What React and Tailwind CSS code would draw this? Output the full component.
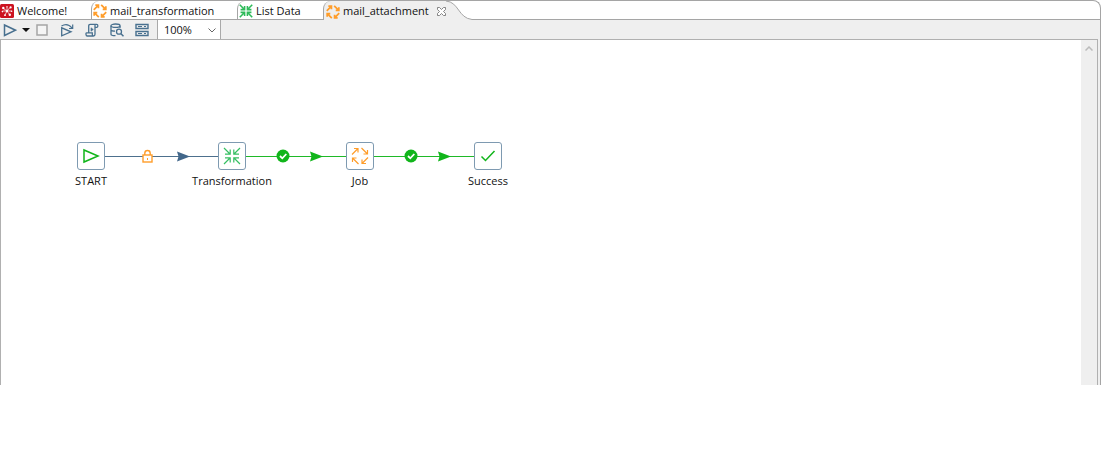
import React from "react";

function WelcomeIcon() {
  return (
    <svg width="14" height="14" viewBox="0 0 14 14" className="shrink-0" aria-hidden="true">
      <rect width="14" height="14" rx="1.5" fill="#cc1320" />
      <path
        d="M7 7 3.500 4.500M7 7l3-3.500M7 7h4.500M7 7l2.500 3.500M7 7l-2 4M7 7H2.500M7 7V3"
        stroke="#fff"
        strokeWidth=".7"
      />
      <g fill="#fff">
        <circle cx="3.300" cy="4" r="1.200" />
        <circle cx="7" cy="2.800" r=".7" />
        <circle cx="10.600" cy="3.400" r="1.100" />
        <circle cx="11.600" cy="7.200" r=".8" />
        <circle cx="9.800" cy="10.800" r="1.200" />
        <circle cx="5" cy="11.200" r=".9" />
        <circle cx="2.400" cy="7.600" r=".8" />
        <circle cx="7" cy="7" r="1.200" />
      </g>
    </svg>
  );
}

function ArrowsOut({ size, width }) {
  return (
    <svg width={size} height={size} viewBox="0 0 18 18" fill="none" stroke="#ff9d2a" strokeWidth={width} className="shrink-0" aria-hidden="true">
      <path d="M1 7.500 7 1.500M3 1.500h4v4" />
      <path d="M10.500 1 16.500 7M16.500 3v4h-4" />
      <path d="M17 10.500 11 16.500M15 16.500h-4v-4" />
      <path d="M7.500 17 1.500 11M1.500 15v-4h4" />
    </svg>
  );
}

function ArrowsIn({ size, width, color }) {
  return (
    <svg width={size} height={size} viewBox="0 0 18 18" fill="none" stroke={color} strokeWidth={width} className="shrink-0" aria-hidden="true">
      <path d="M1 1l6 6M7.200 2.500v4.700H2" />
      <path d="M17 1l-6 6M10.800 2.500v4.700H16" />
      <path d="M1 17l6-6M7.200 15.500v-4.700H2" />
      <path d="M17 17l-6-6M10.800 15.500v-4.700H16" />
    </svg>
  );
}

function Tab({ icon, label, width, first }) {
  return (
    <button
      role="tab"
      aria-selected="false"
      className={`flex h-[19px] shrink-0 items-center gap-0.5 border-b border-[#a5a5a5] pt-0.5 ${width} ${first ? "" : "rounded-tl-lg border-l pl-px"}`}
    >
      {icon}
      <span className="whitespace-nowrap pl-px">{label}</span>
    </button>
  );
}

function ToolButton({ label, children, width = "w-[25px]" }) {
  return (
    <button aria-label={label} className={`flex h-5 shrink-0 items-center justify-center ${width}`}>
      {children}
    </button>
  );
}

function ToolSvg({ children }) {
  return (
    <svg width="14" height="14" viewBox="0 0 14 14" fill="none" stroke="#48708f" strokeWidth="1.5" className="shrink-0" aria-hidden="true">
      {children}
    </svg>
  );
}

function Toolbar() {
  return (
    <div role="toolbar" className="flex h-[19px] items-center bg-[#efefef] pl-0.5">
      <ToolButton label="Run" width="w-[15px]">
        <ToolSvg>
          <path d="M1.500 2v10.500L12.500 7.200z" />
        </ToolSvg>
      </ToolButton>
      <ToolButton label="Run options" width="w-[17px]">
        <svg width="8" height="4" viewBox="0 0 8 4" aria-hidden="true">
          <path d="M0 0h8L4 4z" fill="#111" />
        </svg>
      </ToolButton>
      <ToolButton label="Stop" width="w-4">
        <svg width="12" height="12" viewBox="0 0 12 12" aria-hidden="true">
          <rect x="1" y="1" width="10" height="10" fill="#f5f5f5" stroke="#a5a5a5" strokeWidth="1.500" />
        </svg>
      </ToolButton>
      <div className="w-1" />
      <ToolButton label="Replay">
        <ToolSvg>
          <path d="M1.700 4.800v8L11 8.800z" strokeWidth="1.300" />
          <path d="M1.500 3C5 .800 9 1.200 12 5M12.700 1.500V5.500H9" strokeWidth="1.200" />
        </ToolSvg>
      </ToolButton>
      <ToolButton label="Generate SQL">
        <ToolSvg>
          <path d="M3.700 9.500V3c0-1 .5-1.700 1.500-1.700h6.500c1.500 0 1.500 3 0 3H10v7c0 1-.6 1.700-1.600 1.700H2.200C.7 13 .7 9.800 1.500 9.800h5.800v1.700c0 .8.400 1.300 1 1.300M10 4.300V2.500c0-.7.300-1.200.9-1.200" strokeWidth="1.300" />
          <path d="M6 4.800v3.400L8.300 6.500z" fill="#48708f" strokeWidth=".6" />
        </ToolSvg>
      </ToolButton>
      <ToolButton label="Explore database">
        <ToolSvg>
          <ellipse cx="5.500" cy="2.700" rx="4.500" ry="1.700" strokeWidth="1.300" />
          <path d="M1 2.700v8.500c0 .9 2 1.500 4.500 1.500M10 2.700V5M1 7c.3.800 2 1.200 4 1.200" strokeWidth="1.300" />
          <circle cx="9" cy="8.700" r="2.500" strokeWidth="1.300" />
          <path d="m11 10.700 2.500 2.500" />
        </ToolSvg>
      </ToolButton>
      <ToolButton label="Show results">
        <ToolSvg>
          <path d="M1 1.500h12v4H1zM1 8.500h12v4H1z" strokeWidth="1.400" />
          <path d="M3 3.500h4M9 3.500h2M3 10.500h4M9 10.500h2" strokeWidth="1.200" />
        </ToolSvg>
      </ToolButton>
      <div className="relative ml-[3px] flex h-full w-16 items-center border-x border-[#a9a9a9] bg-white">
        <select aria-label="Zoom" defaultValue="100%" className="h-full w-full appearance-none bg-transparent pl-1.5 leading-4 outline-none">
          <option>50%</option>
          <option>100%</option>
          <option>200%</option>
        </select>
        <svg width="8" height="5" viewBox="0 0 8 5" className="pointer-events-none absolute right-1 top-2" fill="none" stroke="#666" aria-hidden="true">
          <path d="M.5.500 4 4 7.500.500" />
        </svg>
      </div>
    </div>
  );
}

function Node({ label, place, children }) {
  return (
    <div className={`absolute top-[102px] flex w-28 -translate-x-1/2 flex-col items-center gap-[3px] ${place}`}>
      <div className="flex size-7 items-center justify-center rounded-[3px] border border-[#7e9ab1] bg-white">{children}</div>
      <span className="leading-4">{label}</span>
    </div>
  );
}

function Check({ x }) {
  return (
    <g>
      <circle cx={x} cy="116" r="6.500" fill="#11b51b" />
      <path d={`M${x - 3} 116l2.300 2.300 4-4.300`} fill="none" stroke="#fff" strokeWidth="1.800" />
    </g>
  );
}

function Hops() {
  return (
    <svg width="520" height="160" viewBox="0 0 520 160" className="absolute left-0 top-0" aria-hidden="true">
      <rect x="90" y="116" width="141" height="1" fill="#4d708d" />
      <rect x="231" y="116" width="256" height="1" fill="#1fb928" />
      <path d="M176 111.500l13 5-13 5 1.500-5z" fill="#42678a" />
      <path d="M309 111.500l13 5-13 5 1.500-5zM437 111.500l13 5-13 5 1.500-5z" fill="#11b51b" />
      <rect x="142" y="115" width="9" height="7" fill="#fff" stroke="#ff9d2a" strokeWidth="1.400" />
      <path d="M143.800 115v-1.800c0-3.700 5.400-3.700 5.400 0v1.800" fill="none" stroke="#ff9d2a" strokeWidth="1.400" />
      <rect x="146" y="118" width="1" height="2" fill="#ff9d2a" />
      <Check x={282} />
      <Check x={410} />
    </svg>
  );
}

export default function App() {
  return (
    <div className="min-h-screen bg-white font-['Open_Sans','Noto_Sans',sans-serif] text-[11px] text-[#111]">
      <main className="rounded-tr-lg border-r border-t border-[#a5a5a5]">
        <div role="tablist" className="flex h-[19px]">
          <Tab first label="Welcome!" width="w-[91px]" icon={<WelcomeIcon />} />
          <Tab label="mail_transformation" width="w-[146px]" icon={<ArrowsOut size={14} width={2.2} />} />
          <Tab label="List Data" width="w-[86px]" icon={<ArrowsIn size={14} width={2} color="#2dba59" />} />
          <div role="tab" aria-selected="true" className="flex h-[19px] shrink-0 items-center rounded-tl-lg border-l border-[#a5a5a5] bg-[#efefef] pl-0.5 pt-0.5">
            <ArrowsOut size={14} width={2.2} />
            <span className="ml-[3px] whitespace-nowrap">mail_attachment</span>
            <button aria-label="Close mail_attachment" className="ml-2">
              <svg width="9" height="9" viewBox="0 0 9 9" fill="#fff" stroke="#777" strokeWidth=".9" className="block" aria-hidden="true">
                <path d="M.5.500h2l2 2 2-2h2v2l-2 2 2 2v2h-2l-2-2-2 2h-2v-2l2-2-2-2z" />
              </svg>
            </button>
          </div>
          <svg width="26" height="19" viewBox="0 0 26 19" className="shrink-0" aria-hidden="true">
            <path d="M0 0C13 1 12 17 26 18.500V19H0z" fill="#efefef" />
            <path d="M0 0C13 1 12 17 26 18.500" fill="none" stroke="#a5a5a5" />
          </svg>
          <div className="flex-1 border-b border-[#a5a5a5]" />
        </div>
        <Toolbar />
        <div className="flex bg-[#efefef] pr-0.5">
          <div className="flex h-[346px] flex-1 border-l border-r border-t border-[#b0b0b0] bg-white">
            <div className="relative flex-1">
              <Hops />
              <Node label="START" place="left-[90px]">
                <svg width="18" height="18" viewBox="0 0 18 18" fill="none" stroke="#11b51b" strokeWidth="1.500" aria-hidden="true">
                  <path d="M2 3v12l14-6z" />
                </svg>
              </Node>
              <Node label="Transformation" place="left-[231px]">
                <ArrowsIn size={18} width={1.2} color="#36bf62" />
              </Node>
              <Node label="Job" place="left-[359px]">
                <ArrowsOut size={18} width={1.2} />
              </Node>
              <Node label="Success" place="left-[487px]">
                <svg width="18" height="18" viewBox="0 0 18 18" fill="none" stroke="#11b51b" strokeWidth="1.500" aria-hidden="true">
                  <path d="M2.500 9.500 6.500 13.500 15.500 4" />
                </svg>
              </Node>
            </div>
            <div className="flex w-4 justify-center bg-[#efefef] pt-1.5">
              <svg width="8" height="5" viewBox="0 0 8 5" fill="none" stroke="#bbb" strokeWidth="1.500" aria-hidden="true">
                <path d="M.5 4.500 4 1l3.500 3.500" />
              </svg>
            </div>
          </div>
        </div>
      </main>
    </div>
  );
}
